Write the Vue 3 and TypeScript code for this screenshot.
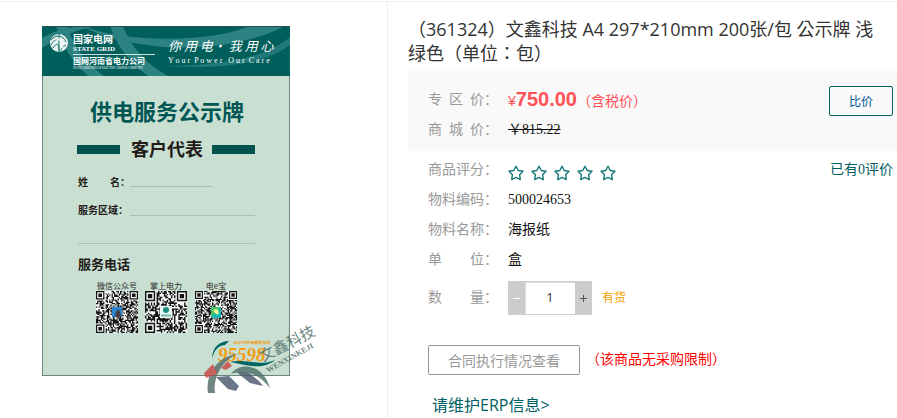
<script setup lang="ts">
import { ref } from 'vue'

interface QrCode {
  label: string
  x: number
  modules: number
  path: string
}

const quantity = ref(1)
const stars = [1, 2, 3, 4, 5]

function inFinder(row: number, col: number, size: number): boolean {
  return (row < 8 && col < 8) || (row < 8 && col >= size - 8) || (row >= size - 8 && col < 8)
}

function finderPixel(row: number, col: number, size: number): boolean {
  const r = row < 8 ? row : row - (size - 7)
  const c = col < 8 ? col : col - (size - 7)
  if (r < 0 || c < 0 || r > 6 || c > 6) return false
  const ring = Math.max(Math.abs(r - 3), Math.abs(c - 3))
  return ring !== 2
}

function qrPath(size: number, seed: number): string {
  let state = seed
  let path = ''
  for (let row = 0; row < size; row++) {
    for (let col = 0; col < size; col++) {
      state = (state * 1103515245 + 12345) % 2147483648
      const dark = inFinder(row, col, size)
        ? finderPixel(row, col, size)
        : (state >> 12) % 100 < 56
      if (dark) path += `M${col} ${row}h1v1h-1z`
    }
  }
  return path
}

const qrCodes: QrCode[] = [
  { label: '微信公众号', x: 96, modules: 35, path: qrPath(35, 77) },
  { label: '掌上电力', x: 145, modules: 29, path: qrPath(29, 1201) },
  { label: '电e宝', x: 195, modules: 37, path: qrPath(37, 5309) },
]

function decrease(): void {
  if (quantity.value > 1) quantity.value--
}
function increase(): void {
  quantity.value++
}
</script>

<template>
  <main class="product">
    <section class="gallery">
      <svg class="poster" viewBox="42 26 280 370" role="img" aria-label="供电服务公示牌">
        <defs>
          <clipPath id="head"><rect x="42" y="26" width="248" height="50" /></clipPath>
        </defs>
        <rect x="42.5" y="26.5" width="247" height="349" fill="#c8dfd2" stroke="#6f8580" />
        <g clip-path="url(#head)">
          <rect x="42" y="26" width="248" height="50" fill="#005e5b" />
          <g fill="#2c8281">
            <path d="M42 48C70 30 92 25 112 26H86C66 27 52 32 42 38z" />
            <path d="M56 26C62 46 73 62 88 76H104C84 62 72 44 68 26z" />
            <path d="M110 26C117 46 130 63 148 76H168C146 64 130 46 123 26z" />
            <path d="M82 26C125 42 205 44 250 26H285C245 47 185 52 140 44C115 40 96 34 82 26z" />
            <path d="M290 37C265 58 225 65 165 66C215 69 262 66 290 45z" opacity=".75" />
          </g>
        </g>
        <rect x="42" y="26" width="248" height="1" fill="#28504e" />

        <g fill="none" stroke="#fff">
          <circle cx="59" cy="43" r="9" fill="#e9f3f1" stroke="none" />
          <path d="M51 40C56 34 63 35 66 42M51 45C55 37 61 38 62 46M53 48C57 42 59 43 59 51M59 34V52M66 45C62 47 61 49 61 51" stroke="#16716d" stroke-width="1" />
          <path d="M55 39C60 38 62 42 62 48" stroke-width="1.5" />
          <path d="M73 54.5H155" stroke-width=".8" />
        </g>
        <g fill="#fff">
          <text class="sans bold" x="73" y="43" font-size="10">国家电网</text>
          <text class="serif bold" x="73" y="51" font-size="7">STATE GRID</text>
          <text class="sans bold" x="73" y="64" font-size="8">国网河南省电力公司</text>
          <text class="serif" x="73" y="69" font-size="3">STATE GRID HENAN ELECTRIC POWER COMPANY</text>
          <text class="sans script" x="168" y="51" font-size="13">你 用 电· 我 用 心</text>
          <text class="serif" x="168" y="63" font-size="8">Y o u r&#160; P o w e r&#160;&#160; O u r&#160; C a r e</text>
        </g>

        <text class="sans bold" x="167" y="120" font-size="22" text-anchor="middle" fill="#005653">供电服务公示牌</text>
        <g fill="#00524f">
          <rect x="77" y="145" width="43" height="9" />
          <rect x="212" y="145" width="43" height="9" />
        </g>
        <g class="sans bold" fill="#231b18">
          <text x="167" y="156" font-size="18" text-anchor="middle">客户代表</text>
          <text x="78" y="186" font-size="10">姓</text>
          <text x="110" y="186" font-size="10">名：</text>
          <text x="78" y="214" font-size="10">服务区域：</text>
          <text x="78" y="269" font-size="13">服务电话</text>
        </g>
        <path d="M130 186.500H213M130 215.500H255M78 243.500H255" stroke="#a9c1b5" fill="none" />

        <g v-for="code in qrCodes" :key="code.label">
          <text class="sans" :x="code.x + 21" y="289" font-size="8" text-anchor="middle" fill="#2b2b28">{{ code.label }}</text>
          <svg :x="code.x" y="291" width="42" height="42" :viewBox="`0 0 ${code.modules} ${code.modules}`">
            <rect width="100%" height="100%" fill="#f7faf8" />
            <path :d="code.path" fill="#151515" />
          </svg>
        </g>
        <rect x="112" y="307" width="10" height="10" fill="#2b83cf" />
        <path d="M115 317L116 312L118 309L120 312L121 317z" fill="#493c42" />
        <rect x="160" y="306" width="12" height="12" fill="#eef7f4" />
        <circle cx="166" cy="310" r="3" fill="#168f83" />
        <path d="M161 315.500H171" stroke="#6fb9ae" stroke-width="2" />
        <rect x="211" y="307" width="10" height="11" rx="2" fill="#16b7bb" />
        <path d="M211 307H221L211 318z" fill="#42c46d" />
        <path d="M213 310C217 308 220 310 218 315L215 313z" fill="#f5f48a" />

        <text class="sans bold italic" x="233" y="344" font-size="4" fill="#f29b13">24小时供电服务热线</text>
        <path d="M229 341C220 341 212 347 212 359C214 350 219 345 225 345z" fill="#006662" />
        <text class="serif bold italic" x="218" y="361" font-size="19" fill="#f49c0c">95598</text>
        <path d="M230 362C247 358 259 367 275 360C262 371 247 365 230 362z" fill="#006662" />

        <g opacity=".82">
          <path d="M208 393C205 373 219 356 237 354C223 361 213 375 215 393z" fill="#536b67" />
          <path d="M204 373L213 364L217 374L206 378zM221 368L228 361L232 366L226 370z" fill="#c74746" />
          <path d="M216 377L229 376L239 386L236 391L228 389zM234 370L244 369L259 381L263 386L250 383z" fill="#4d5870" />
          <path d="M231 374C240 361 263 364 270 388C259 374 246 369 231 374z" fill="#4c716a" />
        </g>
        <g fill="#526e68" fill-opacity=".88">
          <text class="sans" x="263" y="362" font-size="15" transform="rotate(-27 263 362)">文鑫科技</text>
          <text class="serif bold" x="268" y="373" font-size="8" transform="rotate(-29 268 373)">WENXINKEJI</text>
        </g>
      </svg>
    </section>

    <section class="details">
      <h1 class="title">（361324）文鑫科技 A4 297*210mm 200张/包 公示牌 浅绿色（单位：包）</h1>

      <div class="prices">
        <div class="row">
          <span class="label">专&#160;&#160;区&#160;&#160;价：</span>
          <span class="price">¥<strong>750.00</strong>（含税价）</span>
        </div>
        <div class="row">
          <span class="label">商&#160;&#160;城&#160;&#160;价：</span>
          <del>￥815.22</del>
        </div>
        <button type="button" class="compare">比价</button>
      </div>

      <div class="facts">
        <div class="row">
          <span class="label">商品评分：</span>
          <span class="stars" role="img" aria-label="0">
            <svg v-for="star in stars" :key="star" width="16" height="16" viewBox="0 0 16 16">
              <path d="M8 1.200L10.200 5.500L15 6.300L11.600 9.700L12.300 14.600L8 12.400L3.700 14.600L4.400 9.700L1 6.300L5.800 5.500z" />
            </svg>
          </span>
          <a class="reviews" href="#reviews">已有0评价</a>
        </div>
        <div class="row"><span class="label">物料编码：</span><span>500024653</span></div>
        <div class="row"><span class="label">物料名称：</span><span>海报纸</span></div>
        <div class="row"><span class="label">单　　位：</span><span>盒</span></div>
      </div>

      <div class="amount">
        <label class="label" for="quantity">数　　量：</label>
        <div class="stepper">
          <button type="button" class="minus" aria-label="-" @click="decrease">
            <svg width="9" height="9" viewBox="0 0 9 9"><path d="M1 4.500H8" /></svg>
          </button>
          <input id="quantity" v-model.number="quantity" type="text" inputmode="numeric" />
          <button type="button" class="plus" aria-label="+" @click="increase">
            <svg width="9" height="9" viewBox="0 0 9 9"><path d="M1 4.500H8M4.500 1V8" /></svg>
          </button>
        </div>
        <span class="stock">有货</span>
      </div>

      <div class="contract">
        <button type="button" class="contract-button">合同执行情况查看</button>
        <span class="limit">（该商品无采购限制）</span>
      </div>

      <a class="erp" href="#erp">请维护ERP信息&gt;</a>
    </section>
  </main>
</template>

<style>
body {
  margin: 0;
  background: #fff;
}
</style>

<style scoped>
.product {
  box-sizing: border-box;
  display: grid;
  grid-template-columns: minmax(0, 388fr) minmax(0, 509fr);
  min-height: 100vh;
  padding-top: 1px;
  font: 14px/30px "Liberation Serif", "Noto Sans CJK SC", sans-serif;
  color: #111;
}
.gallery {
  border-top: 1px solid #eee;
  border-right: 1px solid #eee;
  padding: 24px 24px 0 42px;
}
.poster {
  display: block;
  width: 100%;
  max-width: 280px;
}
.sans {
  font-family: "Noto Sans CJK SC", sans-serif;
}
.serif {
  font-family: "Liberation Serif", serif;
}
.bold {
  font-weight: 700;
}
.italic,
.script {
  font-style: italic;
}
.details {
  border-top: 1px solid #eee;
  padding-left: 20px;
}
.title {
  margin: 0;
  padding: 15px 8px 6px 0;
  font: 400 18px/24px "Open Sans", "Noto Sans CJK TC", sans-serif;
  color: #333;
}
.prices {
  position: relative;
  padding: 14px 0 6px 20px;
  background: #f9f9f9;
}
.row {
  display: flex;
  align-items: center;
  height: 30px;
}
.label {
  flex: 0 0 80px;
  color: #999;
  white-space: nowrap;
}
.price {
  font-family: "Liberation Sans", "Noto Sans CJK TC", sans-serif;
  color: #ff5257;
}
.price strong {
  font-size: 20px;
}
button {
  box-sizing: border-box;
  padding: 0;
  font-family: inherit;
  cursor: pointer;
}
.compare {
  position: absolute;
  top: 15px;
  right: 4px;
  width: 64px;
  height: 30px;
  border: 1px solid #00625f;
  border-radius: 2px;
  background: transparent;
  font-size: 12px;
  color: #005a96;
}
.facts {
  padding: 4px 4px 0 20px;
}
.stars {
  display: flex;
  gap: 7px;
  padding-top: 6px;
}
.stars path {
  fill: none;
  stroke: #167878;
  stroke-width: 1.4px;
  stroke-linejoin: round;
}
a {
  color: #005e63;
  text-decoration: none;
}
.reviews {
  margin-left: auto;
}
.amount {
  display: flex;
  align-items: center;
  padding: 6px 0 0 20px;
}
.stepper {
  display: flex;
  height: 34px;
  background: #ccc;
}
.stepper button {
  display: flex;
  align-items: center;
  justify-content: center;
  width: 17px;
  border: 0;
  background: #ccc;
}
.stepper path {
  stroke-width: 1px;
}
.minus path {
  stroke: #fff;
}
.plus path {
  stroke: #555;
}
.stepper input {
  box-sizing: border-box;
  width: 50px;
  height: 34px;
  border: 1px solid #ccc;
  border-width: 1px 0;
  padding: 0 0 2px;
  background: #fff;
  box-shadow: inset 1px 1px 1px #ddd;
  font: 12px "Noto Sans", sans-serif;
  color: #333;
  text-align: center;
}
.stock {
  padding-left: 10px;
  font-size: 12px;
  color: #f5a000;
}
.contract {
  display: flex;
  align-items: center;
  gap: 6px;
  padding: 30px 0 16px 20px;
}
.contract-button {
  width: 152px;
  height: 30px;
  border: 1px solid #999;
  border-radius: 2px;
  background: #fff;
  font-size: 14px;
  color: #999;
}
.limit {
  color: #f00;
}
.erp {
  display: block;
  width: max-content;
  margin-left: 24px;
  font-family: "Open Sans", "Noto Sans CJK SC", sans-serif;
  font-size: 16px;
  line-height: 28px;
}
</style>
